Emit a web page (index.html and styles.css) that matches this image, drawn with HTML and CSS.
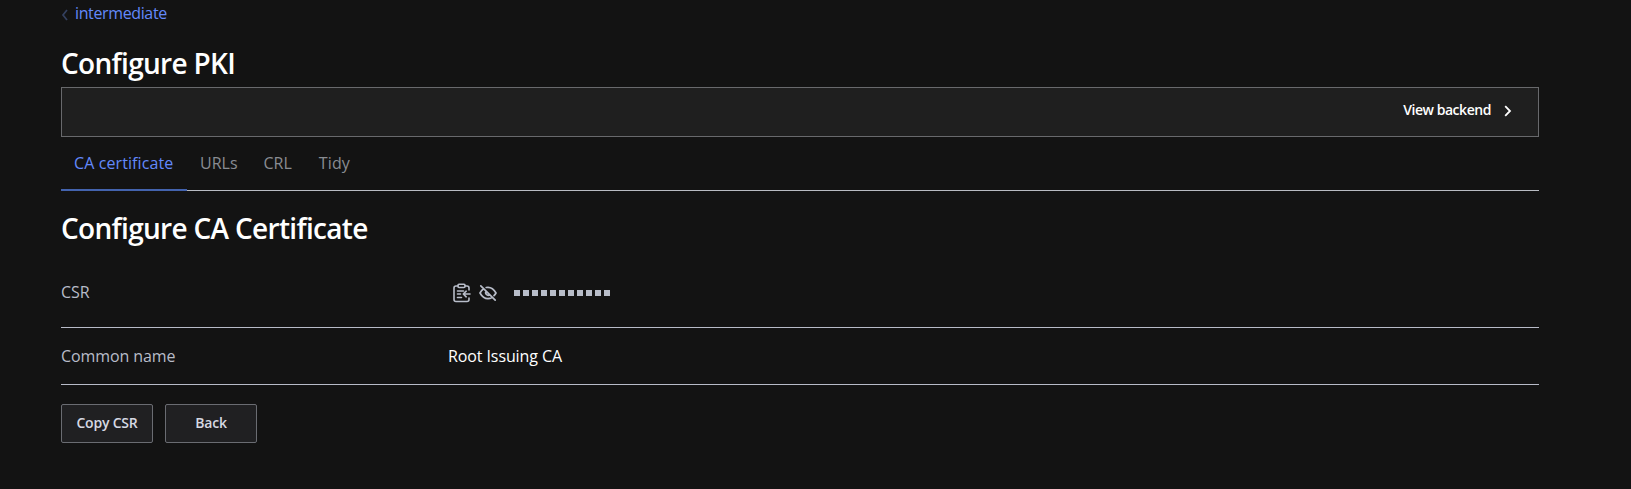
FILE: index.html
```html
<!DOCTYPE html>
<html lang="en">
<head>
<meta charset="utf-8">
<title>Configure PKI</title>
<link rel="stylesheet" href="styles.css">
</head>
<body>
<main class="page">
  <nav class="breadcrumb">
    <svg class="crumb-icon" width="8" height="14" viewBox="0 0 8 14"><path d="M6 2 2 7l4 5" fill="none" stroke="currentColor" stroke-width="1.7"/></svg>
    <a class="crumb-link">intermediate</a>
  </nav>
  <h1 class="title">Configure PKI</h1>
  <div class="toolbar">
    <a class="toolbar-link">View backend</a>
    <svg class="toolbar-icon" width="8" height="12" viewBox="0 0 8 12"><path d="m1.200 1.200 4.800 4.800-4.800 4.800" fill="none" stroke="currentColor" stroke-width="1.800"/></svg>
  </div>
  <nav class="tabs">
    <a class="tab tab-active">CA certificate</a>
    <a class="tab">URLs</a>
    <a class="tab">CRL</a>
    <a class="tab tab-tidy">Tidy</a>
  </nav>
  <h2 class="title subtitle">Configure CA Certificate</h2>
  <div class="row row-csr">
    <span class="label">CSR</span>
    <div class="masked">
      <svg width="18" height="20" viewBox="0 0 18 20" fill="none" stroke="currentColor" stroke-width="1.6" stroke-linecap="round" stroke-linejoin="round"><path d="M5 3H3a2 2 0 0 0-2 2v11.500a2 2 0 0 0 2 2h11a2 2 0 0 0 2-2V15M12 3h2a2 2 0 0 1 2 2v2"/><rect x="5" y="1.200" width="7" height="3.300" rx="1"/><path d="M4.500 8h6M4.500 11h3M4.500 14.500h4M17 11h-6.500M13.200 8.200 10.300 11l2.900 2.800"/></svg>
      <svg width="18" height="18" viewBox="0 0 18 18" fill="none" stroke="currentColor" stroke-width="1.700" stroke-linecap="round" stroke-linejoin="round"><path d="M1.800 1.800l14.400 14.400M7.200 3.500A7.500 7.500 0 0 1 9 3.300c4.800 0 8 5.700 8 5.700a13 13 0 0 1-2 2.700M4.600 4.700A12.500 12.500 0 0 0 1 9s3.200 5.700 8 5.700a7.400 7.400 0 0 0 3.900-1.200M7.200 7.200a2.500 2.500 0 0 0 3.500 3.500"/></svg>
      <span class="dots"><i class="dot"></i><i class="dot"></i><i class="dot"></i><i class="dot"></i><i class="dot"></i><i class="dot"></i><i class="dot"></i><i class="dot"></i><i class="dot"></i><i class="dot"></i><i class="dot"></i></span>
    </div>
  </div>
  <div class="row row-name">
    <span class="label label-name">Common name</span>
    <span class="value">Root Issuing CA</span>
  </div>
  <div class="actions">
    <button class="button">Copy CSR</button>
    <button class="button">Back</button>
  </div>
</main>
</body>
</html>
```
FILE: styles.css
```css
* { box-sizing: border-box; }
body {
  margin: 0;
  background: #131313;
  color: #fff;
  font: 16px/24px "Open Sans", "Noto Sans", sans-serif;
  overflow: hidden;
}
.page { width: 1478px; margin-left: 61px; display: flex; flex-direction: column; }
.breadcrumb { height: 27px; display: flex; align-items: center; gap: 6px; color: #6389fb; }
.crumb-icon { color: #34405f; margin-top: 2px; }
.crumb-link { margin-top: -2px; letter-spacing: -0.37px; }
.title { margin: 18px 0 0; height: 42px; font-size: 28px; line-height: 36px; font-weight: 600; letter-spacing: -0.68px; }
.toolbar {
  height: 50px;
  border: 1px solid #68696c;
  background: #1f1f1f;
  display: flex;
  align-items: flex-start;
  justify-content: flex-end;
  padding: 10px 26px 0 0;
  gap: 13px;
}
.toolbar-link { font-size: 14px; line-height: 24px; font-weight: 600; letter-spacing: -0.45px; }
.toolbar-icon { margin-top: 7px; }
.tabs { height: 54px; border-bottom: 1px solid #b9bcc3; display: flex; color: #898c92; }
.tab { height: 54px; padding: 14px 13px 0; }
.tab-active { color: #6389fb; border-bottom: 2px solid #4363ae; width: 126px; white-space: nowrap; letter-spacing: 0.1px; }
.tab-tidy { padding-left: 14px; letter-spacing: 0.1px; }
.subtitle { margin-top: 19px; height: 57px; }
.row { display: flex; border-bottom: 1px solid #b8bbc8; }
.row-csr { height: 61px; padding-top: 13px; }
.row-name { height: 57px; padding-top: 16px; }
.label { width: 387px; color: #b8bcc8; }
.label-name { letter-spacing: -0.1px; }
.value { letter-spacing: -0.1px; }
.masked { height: 26px; padding-left: 5px; display: flex; align-items: center; gap: 8px; color: #b8bdc9; }
.dots { display: flex; gap: 3px; margin-left: 9px; }
.dot { width: 6px; height: 6px; background: #b8bdc9; }
.actions { display: flex; gap: 12px; margin-top: 19px; }
.button {
  width: 92px;
  height: 39px;
  padding: 0 0 1px;
  border: 1px solid #6a6c72;
  border-radius: 2px;
  background: #202022;
  color: #d6d9e3;
  font: 600 14px/20px "Open Sans", "Noto Sans", sans-serif;
  letter-spacing: -0.2px;
}
```
